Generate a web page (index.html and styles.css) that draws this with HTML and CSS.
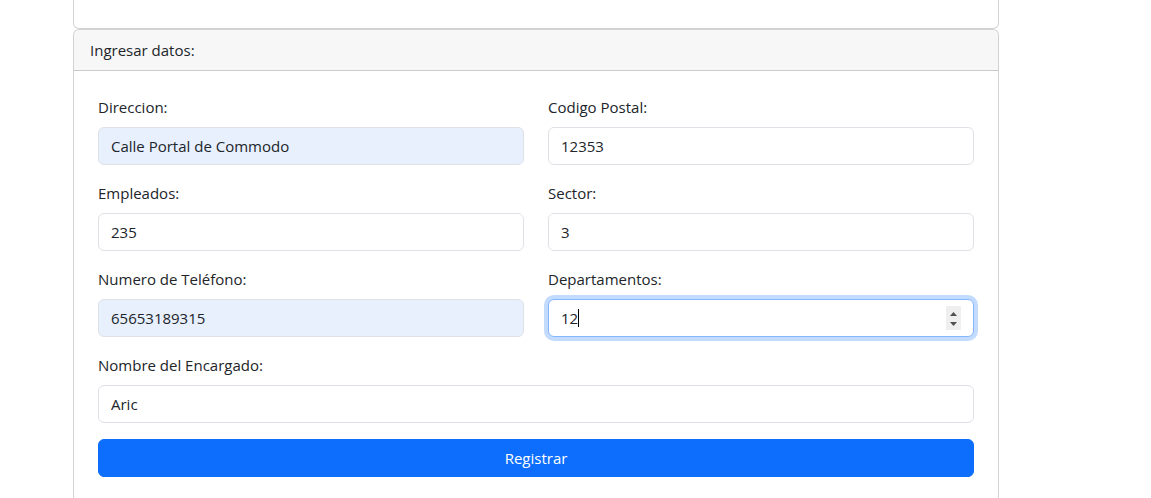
FILE: index.html
```html
<!DOCTYPE html>
<html lang="es">
<head>
<meta charset="utf-8">
<title>Ingresar datos</title>
<link rel="stylesheet" href="styles.css">
</head>
<body>
<div class="wrap">
  <div class="card card-top"></div>
  <div class="card">
    <div class="card-header">Ingresar datos:</div>
    <form class="card-body">
      <div class="grid">
        <div class="field">
          <label class="label" for="dir">Direccion:</label>
          <input class="input autofill" id="dir" type="text" value="Calle Portal de Commodo">
        </div>
        <div class="field">
          <label class="label" for="cp">Codigo Postal:</label>
          <input class="input" id="cp" type="text" value="12353">
        </div>
        <div class="field">
          <label class="label" for="emp">Empleados:</label>
          <input class="input" id="emp" type="text" value="235">
        </div>
        <div class="field">
          <label class="label" for="sec">Sector:</label>
          <input class="input" id="sec" type="text" value="3">
        </div>
        <div class="field">
          <label class="label" for="tel">Numero de Teléfono:</label>
          <input class="input autofill" id="tel" type="text" value="65653189315">
        </div>
        <div class="field">
          <label class="label" for="dep">Departamentos:</label>
          <div class="input focus number" id="dep">
            <span class="num-value">12</span><span class="caret"></span>
            <span class="spin">
              <svg width="15" height="24" viewBox="0 0 15 24"><path d="M4 10 L7.5 6 L11 10 Z" fill="#505050"/><path d="M4 16 L11 16 L7.5 20 Z" fill="#505050"/></svg>
            </span>
          </div>
        </div>
        <div class="field full">
          <label class="label" for="enc">Nombre del Encargado:</label>
          <input class="input" id="enc" type="text" value="Aric">
        </div>
      </div>
      <button class="btn" type="button">Registrar</button>
    </form>
  </div>
</div>
</body>
</html>
```
FILE: styles.css
```css
* { box-sizing: border-box; }
html, body { margin: 0; background: #fff; }
body {
  font-family: "Open Sans", "Noto Sans", sans-serif;
  font-size: 15px;
  color: #212529;
  line-height: 24px;
}
.wrap {
  margin-left: 73px;
  width: 926px;
}
.card {
  border: 1px solid rgba(0,0,0,0.175);
  border-radius: 6px;
  background: #fff;
}
.card-top {
  height: 29px;
  border-top: 0;
  border-radius: 0 0 6px 6px;
}
.card-header {
  background: #f7f7f7;
  border-bottom: 1px solid rgba(0,0,0,0.175);
  padding: 8px 16px;
  height: 41px;
  border-radius: 6px 6px 0 0;
}
.card-body {
  padding: 24px;
}
.grid {
  display: grid;
  grid-template-columns: 1fr 1fr;
  column-gap: 24px;
}
.field { margin-bottom: 16px; display: flex; flex-direction: column; }
.field.full { grid-column: 1 / -1; }
.label { display: block; margin-bottom: 8px; height: 24px; }
.input {
  display: block;
  width: 100%;
  height: 38px;
  padding: 6px 12px;
  font: inherit;
  color: #212529;
  background: #fff;
  border: 1px solid #dee2e6;
  border-radius: 6px;
  outline: none;
}
.input.autofill { background: #e8f0fe; }
.input.focus {
  border-color: #86b7fe;
  box-shadow: 0 0 0 4px rgba(13,110,253,0.25);
}
.number {
  display: flex;
  align-items: center;
  padding-right: 12px;
}
.caret {
  display: inline-block;
  width: 1px;
  height: 18px;
  background: #000;
}
.spin {
  margin-left: auto;
  width: 15px;
  height: 24px;
  background: #efefef;
  display: flex;
}
.btn {
  display: block;
  width: 100%;
  height: 38px;
  font: inherit;
  color: #fff;
  background: #0d6efd;
  border: 1px solid #0d6efd;
  border-radius: 6px;
  padding: 6px 12px;
}
```
